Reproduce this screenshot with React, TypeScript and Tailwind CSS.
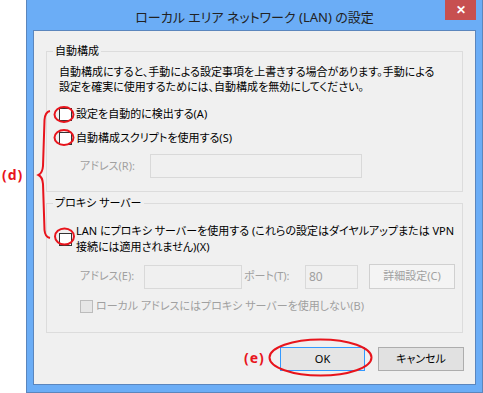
import React from "react";

// Windows 8 style "LAN settings" dialog with red annotations

function Box({ disabled = false }: { disabled?: boolean }) {
  return (
    <span
      className={
        disabled
          ? "block w-[13px] h-[13px] shrink-0 border border-[#bcbcbc] bg-[#e6e6e6]"
          : "block w-[13px] h-[13px] shrink-0 border border-[#333333] bg-white"
      }
    />
  );
}

function Field({ width, value }: { width: string; value?: string }) {
  return (
    <div
      className={`h-[24px] shrink-0 ${width} border border-[#d9d9d9] bg-[#f0f0f0] text-[#a0a0a0] pl-[3px] leading-[22px] text-[12px]`}
    >
      {value}
    </div>
  );
}

export default function App() {
  const gray = "text-[#a0a0a0]";

  return (
    <div className="relative w-[483px] h-[393px] bg-white overflow-hidden pl-[26px] font-['Noto_Sans','Noto_Sans_CJK_JP',sans-serif] text-[11px] whitespace-nowrap [font-feature-settings:'palt'] text-black">
      {/* window frame */}
      <div className="w-[457px] h-[393px] bg-[#6badf6] border-l border-r border-b border-[#5b86bd] flex flex-col">
        {/* title bar */}
        <div className="h-[30px] shrink-0 grid grid-cols-[1fr_auto_1fr]">
          <div />
          <div className="text-[13px] leading-[30px] text-[#222] pt-[2px]">
            ローカル エリア ネットワーク (LAN) の設定
          </div>
          <div className="flex justify-end pr-[6px]">
            <div className="w-[31px] h-[20px] bg-[#c75050] flex items-center justify-center text-white text-[12px] font-bold leading-none">
              ✕
            </div>
          </div>
        </div>

        {/* client area */}
        <div className="ml-[6px] w-[443px] h-[355px] shrink-0 border border-[#5b86bd] bg-[#f0f0f0] flex flex-col">
          {/* 自動構成 */}
          <fieldset className="mt-[12px] ml-[12px] w-[417px] border border-[#dcdcdc] p-0 pb-[13px]">
            <legend className="ml-[6px] px-[2px] leading-[16px]">自動構成</legend>
            <div className="pl-[12px] pt-[5px] leading-[15px]">
              自動構成にすると、手動による設定事項を上書きする場合があります。手動による
              <br />
              設定を確実に使用するためには、自動構成を無効にしてください。
            </div>
            <div className="mt-[12px] pl-[12px] h-[16px] flex items-center gap-[4px]">
              <Box />
              <span>設定を自動的に検出する(A)</span>
            </div>
            <div className="mt-[8px] pl-[12px] h-[16px] flex items-center gap-[4px]">
              <Box />
              <span>自動構成スクリプトを使用する(S)</span>
            </div>
            <div className="mt-[8px] pl-[33px] flex items-center">
              <span className={`${gray} w-[70px]`}>アドレス(R):</span>
              <Field width="w-[212px]" />
            </div>
          </fieldset>

          {/* プロキシ サーバー */}
          <fieldset className="mt-[3px] ml-[12px] w-[417px] border border-[#dcdcdc] p-0 pb-[18px]">
            <legend className="ml-[6px] px-[2px] leading-[16px]">プロキシ サーバー</legend>
            <div className="mt-[12px] pl-[12px] flex items-center gap-[4px]">
              <Box />
              <span className="leading-[16px]">
                LAN にプロキシ サーバーを使用する (これらの設定はダイヤルアップまたは VPN
                <br />
                接続には適用されません)(X)
              </span>
            </div>
            <div className="mt-[9px] pl-[33px] flex items-center">
              <span className={`${gray} w-[64px]`}>アドレス(E):</span>
              <Field width="w-[98px]" />
              <span className={`${gray} ml-[2px] w-[61px]`}>ポート(T):</span>
              <Field width="w-[53px]" value="80" />
              <div className="ml-[11px] w-[86px] h-[25px] shrink-0 border border-[#d0d0d0] bg-[#f4f4f4] flex items-center justify-center text-[#a0a0a0]">
                詳細設定(C)
              </div>
            </div>
            <div className="mt-[9px] pl-[33px] h-[16px] flex items-center gap-[3px]">
              <Box disabled />
              <span className={gray}>ローカル アドレスにはプロキシ サーバーを使用しない(B)</span>
            </div>
          </fieldset>

          {/* buttons */}
          <div className="mt-[14px] pr-[11px] flex justify-end gap-[13px]">
            <div className="w-[85px] h-[24px] border border-[#3399ff] bg-[#e5e5e5] flex items-center justify-center">
              OK
            </div>
            <div className="w-[86px] h-[24px] border border-[#adadad] bg-[#e1e1e1] flex items-center justify-center">
              キャンセル
            </div>
          </div>
        </div>
      </div>

      {/* red annotations */}
      <svg
        className="absolute inset-0 pointer-events-none"
        width="483"
        height="393"
        viewBox="0 0 483 393"
        fill="none"
        stroke="#e8141c"
        strokeWidth="2"
      >
        <ellipse cx="64" cy="114.5" rx="9.5" ry="7.5" />
        <ellipse cx="64" cy="137.5" rx="9.5" ry="7.5" />
        <ellipse cx="64.5" cy="236.5" rx="9.5" ry="8" />
        <ellipse cx="320.5" cy="357.5" rx="51" ry="18" />
        <path d="M50 111 Q45 112 44.5 120 L43 166 Q42.5 173 38.5 175 Q42.5 177 43 184 L44.5 230 Q45 237 50 238" />
      </svg>
      <span className="absolute left-[2px] top-[164px] text-[14px] font-bold text-[#e8141c] tracking-[1px]">
        (d)
      </span>
      <span className="absolute left-[244px] top-[347px] text-[14px] font-bold text-[#e8141c] tracking-[1px]">
        (e)
      </span>
    </div>
  );
}
